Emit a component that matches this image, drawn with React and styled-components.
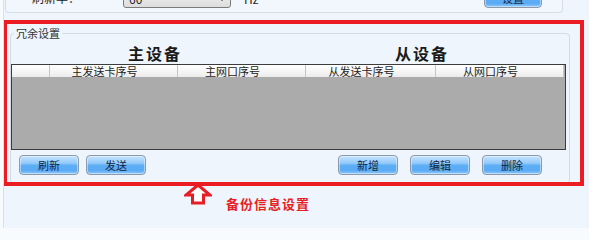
import React from "react";
import styled, { createGlobalStyle } from "styled-components";

const GlobalStyle = createGlobalStyle`
  html, body {
    margin: 0;
    padding: 0;
    height: 228px;
    overflow: hidden;
    background: #f8fbfe;
  }
  body {
    font-family: "Noto Sans CJK SC", "Liberation Sans", sans-serif;
    font-size: 11px;
    color: #1c1c1c;
  }
`;

const Page = styled.div`
  position: relative;
  margin-left: 3px;
  height: 228px;
  overflow: hidden;
  border-left: 1px solid #d9e1ea;
  background: #eef5fc;
`;

const TopPanel = styled.div`
  box-sizing: border-box;
  display: flex;
  align-items: center;
  margin: -18px 0 0 1px;
  width: 558px;
  height: 31px;
  padding: 2px 20px 0 26px;
  border: 1px solid #d5dde6;
  border-top: none;
  border-radius: 0 0 4px 4px;
  background: #f1f7fd;
`;

const Label = styled.span`
  width: 91px;
  font-size: 12px;
  line-height: 14px;
`;

const Select = styled.div`
  box-sizing: border-box;
  display: flex;
  align-items: center;
  justify-content: space-between;
  width: 108px;
  height: 20px;
  padding: 0 4px 0 5px;
  border: 1px solid #7b7b7b;
  border-radius: 3px;
  background: linear-gradient(#f4f4f4, #dddddd);
  font-size: 12px;

  &::after {
    content: "";
    border-left: 4px solid transparent;
    border-right: 4px solid transparent;
    border-top: 5px solid #111;
  }
`;

const Unit = styled.span`
  margin-left: 13px;
  font-size: 12px;
`;

const Button = styled.button`
  box-sizing: border-box;
  width: ${(p) => p.$w || 60}px;
  height: 20px;
  margin: ${(p) => (p.$push ? "0 0 0 auto" : "0")};
  padding: 0;
  border: 1px solid #8c9aab;
  border-radius: 4px;
  background: linear-gradient(
    #c6e3fd 0%,
    #93cafb 40%,
    #5eaef6 52%,
    #5aabf5 80%,
    #8fc8fa 100%
  );
  box-shadow: inset 0 0 0 1px rgba(255, 255, 255, 0.45);
  font-family: "Noto Sans CJK SC", "Liberation Sans", sans-serif;
  font-size: 11px;
  line-height: 18px;
  color: #17263a;
`;

const RedFrame = styled.div`
  position: absolute;
  left: -1px;
  top: 20px;
  width: 581px;
  height: 166px;
  box-sizing: border-box;
  border: 4px solid #ec1c24;
  pointer-events: none;
`;

const GroupBox = styled.fieldset`
  box-sizing: border-box;
  width: 560px;
  height: 157px;
  margin: 14px 0 0 6px;
  padding: 3px 0 0 0;
  min-width: 0;
  border: 1px solid #d3dbe5;
  border-radius: 4px;
`;

const Legend = styled.legend`
  margin-left: 3px;
  padding: 0 2px;
  font-size: 11px;
  line-height: 13px;
  color: #333;
`;

const TitleRow = styled.div`
  display: grid;
  grid-template-columns: 288px 246px;
  height: 21px;
`;

const Title = styled.div`
  text-align: center;
  font-size: 16px;
  font-weight: 700;
  line-height: 21px;
  letter-spacing: 2px;
  color: #1a1a1a;
`;

const Table = styled.div`
  box-sizing: border-box;
  width: 555px;
  height: 86px;
  border: 1px solid #3c3c3c;
  background: #ababab;
`;

const HeaderRow = styled.div`
  display: flex;
  height: 12px;
`;

const HeaderCell = styled.div`
  box-sizing: border-box;
  width: ${(p) => p.$w}px;
  padding-right: 18px;
  border-right: 1px solid #c6c6c6;
  background: linear-gradient(#ffffff, #ececec);
  text-align: center;
  font-size: 11px;
  line-height: 12px;
  white-space: nowrap;
  overflow: hidden;
`;

const ButtonRow = styled.div`
  display: flex;
  align-items: center;
  margin-top: 5px;
  padding: 0 27px 0 8px;
`;

const ButtonGroup = styled.div`
  display: flex;
  gap: ${(p) => p.$gap}px;
  margin-left: ${(p) => (p.$right ? "auto" : "0")};
`;

const Note = styled.div`
  display: flex;
  align-items: flex-start;
  margin: -1px 0 0 180px;
`;

const NoteText = styled.span`
  margin: 13px 0 0 14px;
  font-size: 13px;
  font-weight: 700;
  line-height: 16px;
  letter-spacing: 1px;
  color: #e61e25;
`;

function UpArrow() {
  return (
    <svg width="28" height="22" viewBox="0 0 28 22">
      <polygon
        points="14,2 26,12 19.5,12 19.5,20 8.5,20 8.5,12 2,12"
        fill="#ffffff"
        stroke="#e61e25"
        strokeWidth="3"
        strokeLinejoin="miter"
      />
    </svg>
  );
}

const columns = [
  { w: 38, label: "" },
  { w: 128, label: "主发送卡序号" },
  { w: 128, label: "主网口序号" },
  { w: 130, label: "从发送卡序号" },
  { w: 128, label: "从网口序号" },
];

export default function App() {
  return (
    <>
      <GlobalStyle />
      <Page>
        <TopPanel>
          <Label>刷新率：</Label>
          <Select>60</Select>
          <Unit>Hz</Unit>
          <Button $w={58} $push>
            设置
          </Button>
        </TopPanel>

        <GroupBox>
          <Legend>冗余设置</Legend>
          <TitleRow>
            <Title>主设备</Title>
            <Title>从设备</Title>
          </TitleRow>
          <Table>
            <HeaderRow>
              {columns.map((c, i) => (
                <HeaderCell key={i} $w={c.w}>
                  {c.label}
                </HeaderCell>
              ))}
            </HeaderRow>
          </Table>
          <ButtonRow>
            <ButtonGroup $gap={7}>
              <Button>刷新</Button>
              <Button>发送</Button>
            </ButtonGroup>
            <ButtonGroup $gap={12} $right>
              <Button>新增</Button>
              <Button>编辑</Button>
              <Button>删除</Button>
            </ButtonGroup>
          </ButtonRow>
        </GroupBox>

        <Note>
          <UpArrow />
          <NoteText>备份信息设置</NoteText>
        </Note>

        <RedFrame />
      </Page>
    </>
  );
}
